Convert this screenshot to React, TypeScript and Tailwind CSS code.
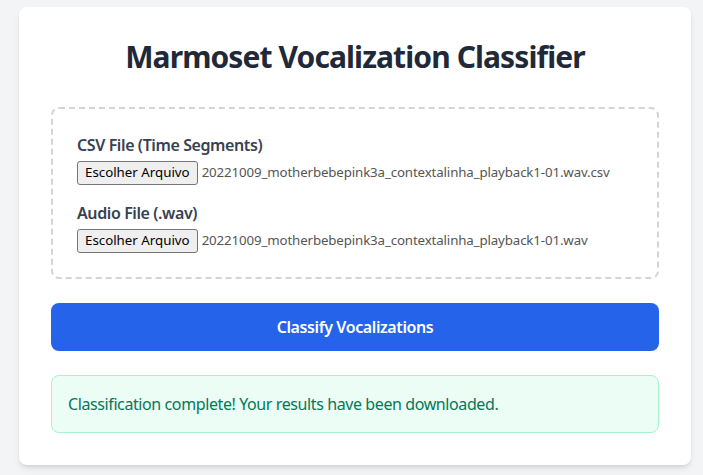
import React from 'react';

const FileField: React.FC<{ label: string; fileName: string }> = ({ label, fileName }) => (
    <div>
        <label className="block text-base font-semibold tracking-tight text-[#374151] mb-1">{label}</label>
        <div className="flex items-center h-6">
            <span className="h-6 px-[7px] flex items-center border border-[#767676] bg-[#efefef] rounded-[3px] text-[13.3px] text-black">
                Escolher Arquivo
            </span>
            <span className="ml-[4px] text-[13.3px] tracking-[-0.01em] text-[#555]">{fileName}</span>
        </div>
    </div>
);

const App: React.FC = () => {
    return (
        <div className="min-h-[475px] bg-[#f3f4f6] pt-[7px] font-['Noto_Sans',sans-serif]">
            <div className="ml-[19px] w-[672px] bg-white rounded-lg shadow-md p-8">
                <h1 className="text-3xl font-bold tracking-[-0.03em] text-[#1f2937] text-center mb-8">Marmoset Vocalization Classifier</h1>
                <div className="border-2 border-dashed border-[#d1d5db] rounded-lg p-6 space-y-4">
                    <FileField label="CSV File (Time Segments)" fileName="20221009_motherbebepink3a_contextalinha_playback1-01.wav.csv" />
                    <FileField label="Audio File (.wav)" fileName="20221009_motherbebepink3a_contextalinha_playback1-01.wav" />
                </div>
                <button className="mt-6 w-full py-3 bg-[#2563eb] text-white font-semibold tracking-tight rounded-lg">
                    Classify Vocalizations
                </button>
                <div className="mt-6 p-4 bg-[#ecfdf5] border border-[#a7f3d0] text-[#047857] tracking-tight rounded-lg">
                    Classification complete! Your results have been downloaded.
                </div>
            </div>
        </div>
    );
};

export default App;
